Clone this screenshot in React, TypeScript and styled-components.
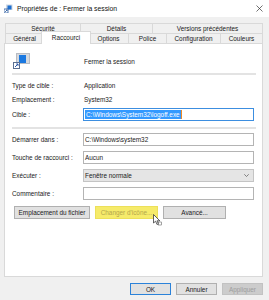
import styled, { createGlobalStyle } from 'styled-components'

const GlobalStyle = createGlobalStyle`
  html, body {
    margin: 0;
    padding: 0;
    background: #f0f0f0;
  }
  body {
    font-family: "Liberation Sans", Arial, sans-serif;
    font-size: 6.4px;
    color: #1a1a1a;
  }
  * {
    box-sizing: border-box;
  }
`

const Window = styled.div`
  width: 269px;
  height: 300px;
  display: flex;
  flex-direction: column;
  background: #f0f0f0;
  overflow: hidden;
`

const TitleBar = styled.div`
  height: 17px;
  background: #fff;
  display: flex;
  align-items: center;
  padding: 0 6px 0 4px;
  gap: 4px;
  font-size: 6.8px;
  color: #111;
`

const TitleText = styled.span`
  flex: 1;
`

const Body = styled.div`
  padding: 6px 6px 0 4px;
  display: flex;
  flex-direction: column;
`

const TabRow = styled.div`
  display: flex;
  height: 10px;
  margin-left: 1px;
`

const Tab = styled.div<{ $w: number; $active?: boolean }>`
  width: ${p => p.$w + (p.$active ? 4 : 0)}px;
  height: ${p => (p.$active ? 13 : 10)}px;
  margin: ${p => (p.$active ? '-2px -3px -1px -2px' : '0 -1px 0 0')};
  display: flex;
  align-items: center;
  justify-content: center;
  border: 1px solid #d9d9d9;
  border-bottom: none;
  background: ${p => (p.$active ? '#fff' : '#f0f0f0')};
  position: relative;
  z-index: ${p => (p.$active ? 2 : 0)};
  white-space: nowrap;
  padding-bottom: ${p => (p.$active ? 2 : 0)}px;
`

const Panel = styled.div`
  height: 234px;
  background: #fff;
  border: 1px solid #d9d9d9;
  padding: 9px 8px 0 7px;
  display: flex;
  flex-direction: column;
`

const Header = styled.div`
  display: grid;
  grid-template-columns: 72px 1fr;
  align-items: center;
  height: 15px;
`

const Separator = styled.div<{ $top: number }>`
  height: 2px;
  width: 244px;
  background: #e3e3e3;
  margin-top: ${p => p.$top}px;
`

const InfoRow = styled.div`
  display: grid;
  grid-template-columns: 72px 1fr;
  align-items: center;
  height: 14px;
`

const FieldRow = styled.div<{ $top: number }>`
  display: grid;
  grid-template-columns: 71px 171px;
  align-items: center;
  margin-top: ${p => p.$top}px;
`

const Field = styled.div<{ $focus?: boolean }>`
  height: 13px;
  border: 1px solid ${p => (p.$focus ? '#3c8ee0' : '#b4b4b4')};
  background: #fff;
  display: flex;
  align-items: center;
  padding-left: 1px;
  white-space: nowrap;
  overflow: hidden;
`

const Selected = styled.span`
  background: #3399ff;
  color: #fff;
  padding: 0 1px;
  line-height: 9px;
  border-right: 1px solid #f08a24;
`

const Select = styled(Field)`
  background: #e5e5e5;
  border-color: #c4c4c4;
  justify-content: space-between;
  padding-right: 4px;
`

const Actions = styled.div`
  display: flex;
  gap: 5px;
  margin: 6px 0 0 2px;
`

const ButtonWrap = styled.div`
  position: relative;
`

const Button = styled.div<{ $w: number; $tone?: 'hl' | 'default' | 'off' }>`
  width: ${p => p.$w}px;
  height: 13px;
  display: flex;
  align-items: center;
  justify-content: center;
  white-space: nowrap;
  background: ${p => (p.$tone === 'hl' ? '#f6eb6a' : p.$tone === 'off' ? '#cccccc' : '#e1e1e1')};
  border: 1px solid
    ${p => (p.$tone === 'hl' ? '#ece05a' : p.$tone === 'default' ? '#2b82d9' : p.$tone === 'off' ? '#c2c2c2' : '#b0b0b0')};
  color: ${p => (p.$tone === 'hl' ? '#b4a74c' : p.$tone === 'off' ? '#9c9c9c' : '#1a1a1a')};
`

const Cursor = styled.svg`
  position: absolute;
  left: 58px;
  top: 8px;
`

const Footer = styled.div`
  display: flex;
  justify-content: flex-end;
  gap: 5px;
  margin-top: 6px;
`

const FooterButton = styled(Button)`
  height: 12px;
`

const TitleIcon = () => (
  <svg width="9" height="9" viewBox="0 0 9 9">
    <rect x="2" y="0.5" width="6.5" height="5.5" fill="#cfd8e3" />
    <rect x="3.5" y="1.5" width="4" height="4" fill="#1e6fd0" />
    <rect x="0" y="5" width="4" height="4" fill="#fff" stroke="#2a5aa0" strokeWidth="0.8" />
    <path d="M1 8 L3 6 M2 6 L3 6 L3 7" stroke="#2a5aa0" strokeWidth="0.8" fill="none" />
  </svg>
)

const BigIcon = () => (
  <svg width="17" height="16" viewBox="0 0 17 16" style={{ marginLeft: 1 }}>
    <rect x="3" y="0" width="14" height="11" fill="#d6d9de" />
    <rect x="3.5" y="0.5" width="13" height="10" fill="none" stroke="#b8bcc3" />
    <rect x="6" y="2" width="7" height="8" fill="#1a78e0" />
    <rect x="0.5" y="9.5" width="6" height="6" fill="#fff" stroke="#5a6f92" />
    <path d="M2 14 L5 11 M3.2 11 L5 11 L5 12.8" stroke="#2856a8" strokeWidth="1" fill="none" />
  </svg>
)

const CloseIcon = () => (
  <svg width="7" height="7" viewBox="0 0 7 7">
    <path d="M0.5 0.5 L6.5 6.5 M6.5 0.5 L0.5 6.5" stroke="#333" strokeWidth="0.7" />
  </svg>
)

const Chevron = () => (
  <svg width="5" height="3" viewBox="0 0 5 3">
    <path d="M0.3 0.3 L2.5 2.5 L4.7 0.3" stroke="#555" strokeWidth="0.7" fill="none" />
  </svg>
)

const upperTabs = [
  { label: 'Sécurité', w: 76 },
  { label: 'Détails', w: 73 },
  { label: 'Versions précédentes', w: 111 },
]

const lowerTabs = [
  { label: 'Général', w: 39 },
  { label: 'Raccourci', w: 46, active: true },
  { label: 'Options', w: 41 },
  { label: 'Police', w: 39 },
  { label: 'Configuration', w: 55 },
  { label: 'Couleurs', w: 43 },
]

export default function App() {
  return (
    <>
      <GlobalStyle />
      <Window>
        <TitleBar>
          <TitleIcon />
          <TitleText>Propriétés de : Fermer la session</TitleText>
          <CloseIcon />
        </TitleBar>
        <Body>
          <TabRow>
            {upperTabs.map(t => (
              <Tab key={t.label} $w={t.w}>{t.label}</Tab>
            ))}
          </TabRow>
          <TabRow>
            {lowerTabs.map(t => (
              <Tab key={t.label} $w={t.w} $active={t.active}>{t.label}</Tab>
            ))}
          </TabRow>
          <Panel>
            <Header>
              <BigIcon />
              <span>Fermer la session</span>
            </Header>
            <Separator $top={5} />
            <InfoRow style={{ marginTop: 3 }}>
              <span>Type de cible :</span>
              <span>Application</span>
            </InfoRow>
            <InfoRow>
              <span>Emplacement :</span>
              <span>System32</span>
            </InfoRow>
            <FieldRow $top={2}>
              <span>Cible :</span>
              <Field $focus>
                <Selected>{'C:\\Windows\\System32\\logoff.exe'}</Selected>
              </Field>
            </FieldRow>
            <Separator $top={6} />
            <FieldRow $top={4}>
              <span>Démarrer dans :</span>
              <Field>{'C:\\Windows\\system32'}</Field>
            </FieldRow>
            <FieldRow $top={5}>
              <span>Touche de raccourci :</span>
              <Field>Aucun</Field>
            </FieldRow>
            <FieldRow $top={5}>
              <span>Exécuter :</span>
              <Select>
                <span>Fenêtre normale</span>
                <Chevron />
              </Select>
            </FieldRow>
            <FieldRow $top={5}>
              <span>Commentaire :</span>
              <Field />
            </FieldRow>
            <Actions>
              <Button $w={76}>Emplacement du fichier</Button>
              <ButtonWrap>
                <Button $w={63} $tone="hl">Changer d'icône...</Button>
                <Cursor width="9" height="12" viewBox="0 0 9 12">
                  <path d="M0.5 0.5 L0.5 9 L2.6 7.2 L4 10.5 L5.4 9.9 L4 6.8 L6.8 6.8 Z" fill="#fff" stroke="#222" strokeWidth="0.7" />
                  <rect x="5.5" y="8" width="3" height="3" fill="#fff" stroke="#444" strokeWidth="0.5" />
                </Cursor>
              </ButtonWrap>
              <Button $w={63}>Avancé...</Button>
            </Actions>
          </Panel>
          <Footer>
            <FooterButton $w={41} $tone="default">OK</FooterButton>
            <FooterButton $w={41}>Annuler</FooterButton>
            <FooterButton $w={41} $tone="off">Appliquer</FooterButton>
          </Footer>
        </Body>
      </Window>
    </>
  )
}
